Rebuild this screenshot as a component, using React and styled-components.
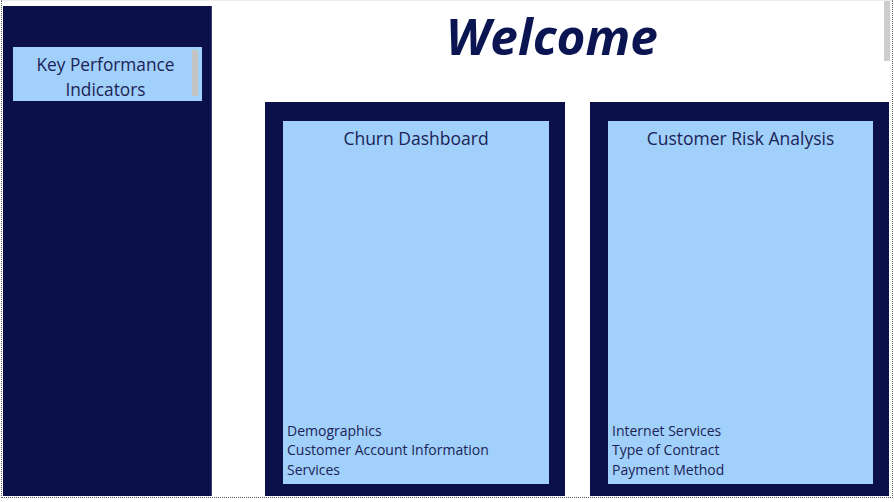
import React from "react";
import styled, { createGlobalStyle } from "styled-components";

const Global = createGlobalStyle`
  html, body { margin: 0; padding: 0; background: #ffffff; }
  body { font-family: "Open Sans", "Noto Sans", sans-serif; overflow: hidden; }
`;

const Frame = styled.div`
  position: relative;
  box-sizing: border-box;
  width: 892px;
  height: 498px;
  margin-left: 1px;
  border-left: 1px dotted #555;
  border-right: 1px dotted #555;
  border-bottom: 1px dotted #555;
  border-top: 1px solid #ececec;
  display: flex;
  align-items: flex-start;
`;

const Sidebar = styled.aside`
  box-sizing: border-box;
  width: 209px;
  height: 490px;
  margin: 5px 0 0 1px;
  padding: 41px 10px 0 10px;
  background: #0b104b;
  border-right: 1px solid #3a3f6e;
`;

const NavButton = styled.button`
  position: relative;
  box-sizing: border-box;
  width: 189px;
  height: 54px;
  border: none;
  padding: 5px 8px 0 4px;
  background: #a1d0fb;
  color: #1b2356;
  font-family: "Open Sans", "Noto Sans", sans-serif;
  font-size: 17.3px;
  line-height: 25px;
  text-align: center;
  vertical-align: top;
`;

const ScrollThumb = styled.span`
  position: absolute;
  top: 3px;
  right: 4px;
  width: 6px;
  height: 46px;
  background: #c4c4c4;
`;

const Main = styled.main`
  flex: 1;
  display: flex;
  flex-direction: column;
  align-items: stretch;
`;

const Title = styled.h1`
  margin: 0;
  height: 101px;
  padding: 2px 0 0 0;
  box-sizing: border-box;
  text-align: center;
  font-family: "Open Sans", "Noto Sans", sans-serif;
  font-style: italic;
  font-weight: 700;
  font-size: 49.5px;
  line-height: 66px;
  color: #0b1551;
  letter-spacing: 0;
`;

const Cards = styled.div`
  display: flex;
  gap: 25px;
  padding-left: 53px;
`;

const Card = styled.section`
  box-sizing: border-box;
  width: ${(p) => p.$w}px;
  height: 394px;
  padding: 19px 16px 12px 18px;
  background: #0b104b;
`;

const CardInner = styled.div`
  box-sizing: border-box;
  height: 100%;
  background: #a1d0fb;
  display: flex;
  flex-direction: column;
  justify-content: space-between;
  padding: 5px 4px 5px 4px;
  color: #1b2356;
`;

const CardTitle = styled.h2`
  margin: 0;
  text-align: center;
  font-weight: 400;
  font-size: 17.5px;
  line-height: 24px;
`;

const List = styled.ul`
  margin: 0;
  padding: 0;
  list-style: none;
  font-size: 14px;
  line-height: 19.5px;
`;

const PageScroll = styled.div`
  position: absolute;
  top: 0;
  right: 2px;
  width: 6px;
  height: 60px;
  background: #cdcdcd;
`;

const cards = [
  {
    title: "Churn Dashboard",
    w: 300,
    items: ["Demographics", "Customer Account Information", "Services"],
  },
  {
    title: "Customer Risk Analysis",
    w: 299,
    items: ["Internet Services", "Type of Contract", "Payment Method"],
  },
];

export default function App() {
  return (
    <>
      <Global />
      <Frame>
        <Sidebar>
          <NavButton>
            Key Performance
            <br />
            Indicators
            <ScrollThumb />
          </NavButton>
        </Sidebar>
        <Main>
          <Title>Welcome</Title>
          <Cards>
            {cards.map((c) => (
              <Card key={c.title} $w={c.w}>
                <CardInner>
                  <CardTitle>{c.title}</CardTitle>
                  <List>
                    {c.items.map((i) => (
                      <li key={i}>{i}</li>
                    ))}
                  </List>
                </CardInner>
              </Card>
            ))}
          </Cards>
        </Main>
        <PageScroll />
      </Frame>
    </>
  );
}
